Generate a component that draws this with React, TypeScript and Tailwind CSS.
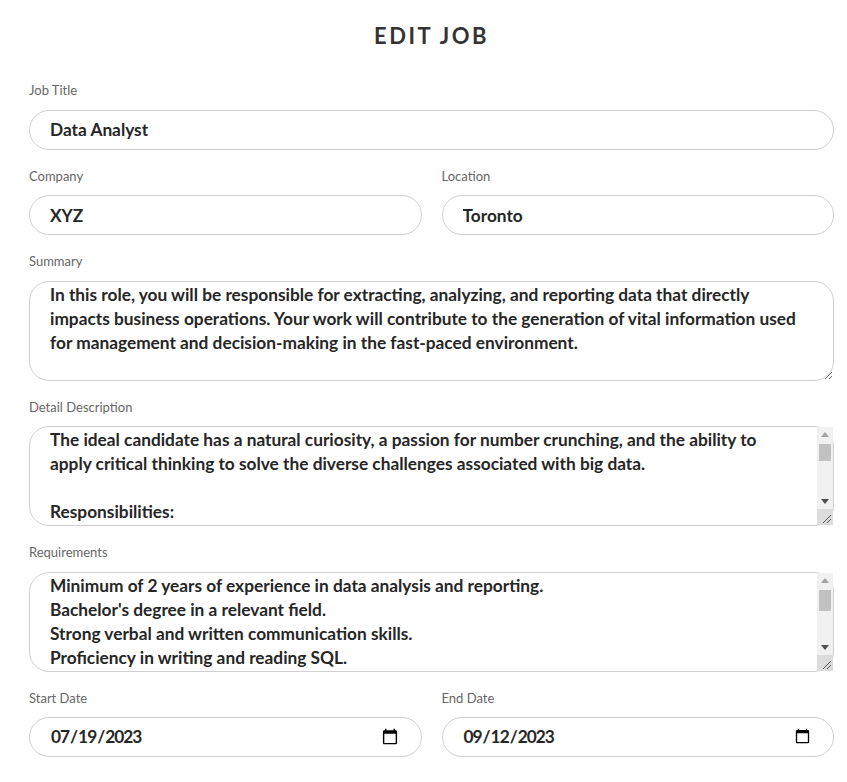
import React from "react";

const summary =
  "In this role, you will be responsible for extracting, analyzing, and reporting data that directly\nimpacts business operations. Your work will contribute to the generation of vital information used\nfor management and decision-making in the fast-paced environment.";

const detail =
  "The ideal candidate has a natural curiosity, a passion for number crunching, and the ability to\napply critical thinking to solve the diverse challenges associated with big data.\n\nResponsibilities:\n- Extract data from primary and secondary sources.\n- Analyze and interpret results using statistical techniques.\n- Develop and implement databases and data collection systems.\n- Identify trends and patterns in complex data sets.";

const requirements =
  "Minimum of 2 years of experience in data analysis and reporting.\nBachelor's degree in a relevant field.\nStrong verbal and written communication skills.\nProficiency in writing and reading SQL.\nExperience with data visualization tools.\nAttention to detail and strong analytical skills.";

const font = { fontFamily: "Lato, 'Noto Sans', sans-serif" };

function Label({ children }: { children: React.ReactNode }) {
  return (
    <label className="block text-[13px] leading-[16px] text-[#666] mb-[11.5px]">{children}</label>
  );
}

const inputCls =
  "block w-full h-[40px] rounded-full border border-[#cfcfcf] bg-white px-[20px] text-[17.3px] font-bold text-[#262626] outline-none";

const areaCls =
  "block w-full h-[100px] rounded-[20px] border border-[#cfcfcf] bg-white pl-[20px] pt-[1px] pb-0 text-[17.3px] leading-[24px] font-bold text-[#262626] outline-none";

function FakeScrollbar({ thumbH }: { thumbH: number }) {
  return (
    <div className="absolute top-[1px] right-[1px] bottom-[1px] w-[16px] flex flex-col bg-[#f1f1f1]">
      <div className="h-[15px] flex items-center justify-center">
        <svg width="8" height="5" viewBox="0 0 8 5">
          <path d="M0 5 L4 0 L8 5 Z" fill="#a3a3a3" />
        </svg>
      </div>
      <div className="flex-1 px-[2px] pt-[2px]">
        <div className="w-full bg-[#c1c1c1]" style={{ height: thumbH }} />
      </div>
      <div className="h-[15px] flex items-center justify-center">
        <svg width="8" height="5" viewBox="0 0 8 5">
          <path d="M0 0 L8 0 L4 5 Z" fill="#505050" />
        </svg>
      </div>
      <div className="h-[16px] bg-[#dcdcdc] relative">
        <svg className="absolute right-[1px] bottom-[1px]" width="10" height="10" viewBox="0 0 10 10">
          <path d="M1 9 L9 1 M5 9 L9 5" stroke="#555" strokeWidth="1" />
        </svg>
      </div>
    </div>
  );
}

export default function App() {
  return (
    <div className="bg-white min-h-[782px] w-[847px] pl-[29px] pr-[13px]" style={font}>
      <h1 className="pt-[22px] text-center text-[22px] leading-[28px] font-bold tracking-[2.5px] text-[#333]">
        EDIT JOB
      </h1>
      <div className="mt-[32px] w-[805px]">
        <Label>Job Title</Label>
        <input className={inputCls} defaultValue="Data Analyst" />

        <div className="mt-[18px] grid grid-cols-2 gap-x-[20px]">
          <div>
            <Label>Company</Label>
            <input className={inputCls} defaultValue="XYZ" />
          </div>
          <div>
            <Label>Location</Label>
            <input className={inputCls} defaultValue="Toronto" />
          </div>
        </div>

        <div className="mt-[18px]">
          <Label>Summary</Label>
          <textarea className={areaCls + " pr-[20px]"} defaultValue={summary} />
        </div>

        <div className="mt-[18px]">
          <Label>Detail Description</Label>
          <div className="relative">
            <textarea
              className={areaCls + " pr-[34px] overflow-hidden resize-none"}
              defaultValue={detail}
            />
            <FakeScrollbar thumbH={17} />
          </div>
        </div>

        <div className="mt-[18px]">
          <Label>Requirements</Label>
          <div className="relative">
            <textarea
              className={areaCls + " pr-[34px] overflow-hidden resize-none leading-[24.6px]"}
              defaultValue={requirements}
            />
            <FakeScrollbar thumbH={21} />
          </div>
        </div>

        <div className="mt-[18px] grid grid-cols-2 gap-x-[20px]">
          <div>
            <Label>Start Date</Label>
            <input type="date" className={inputCls + " tracking-[-1px]"} defaultValue="2023-07-19" />
          </div>
          <div>
            <Label>End Date</Label>
            <input type="date" className={inputCls + " tracking-[-1px]"} defaultValue="2023-09-12" />
          </div>
        </div>
      </div>
    </div>
  );
}
